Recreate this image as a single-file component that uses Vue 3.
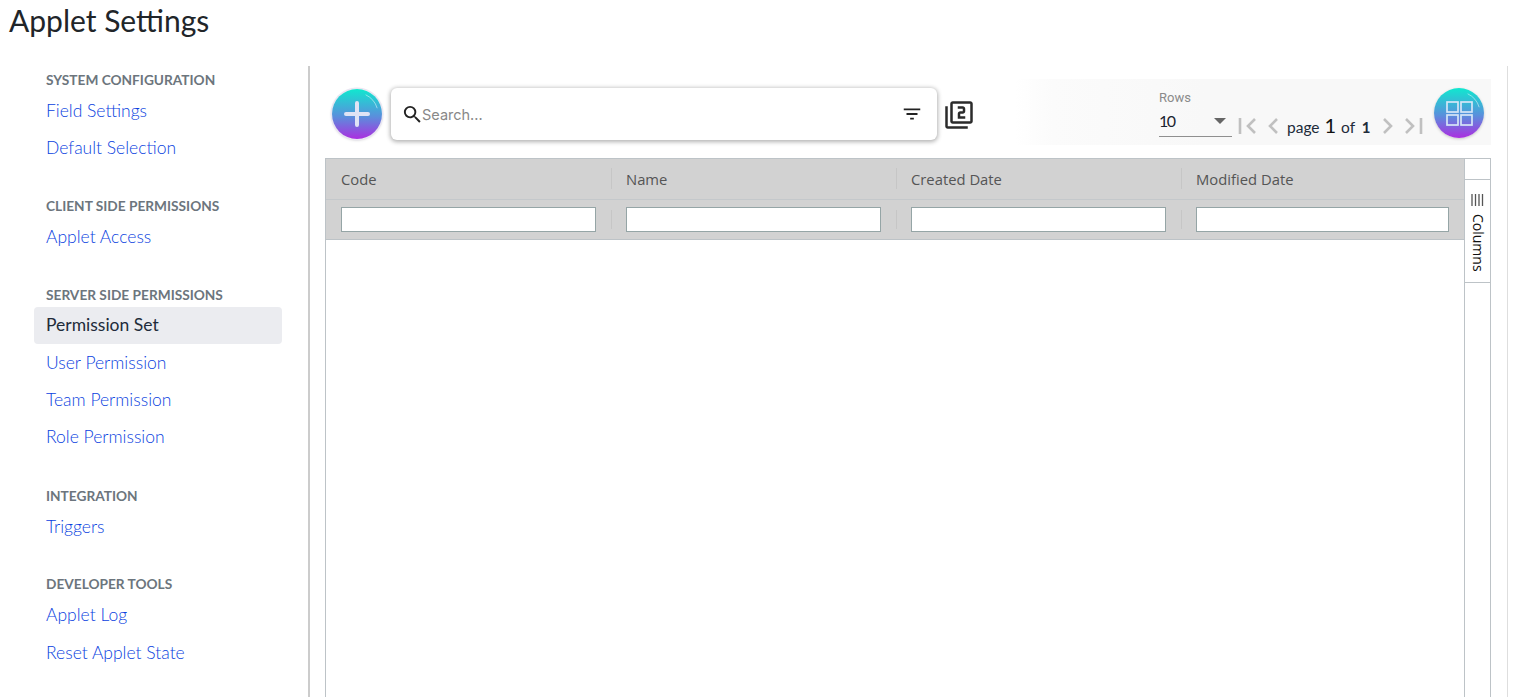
<script setup>
const groups = [
  { title: 'SYSTEM CONFIGURATION', items: ['Field Settings', 'Default Selection'] },
  { title: 'CLIENT SIDE PERMISSIONS', items: ['Applet Access'] },
  { title: 'SERVER SIDE PERMISSIONS', items: ['Permission Set', 'User Permission', 'Team Permission', 'Role Permission'] },
  { title: 'INTEGRATION', items: ['Triggers'] },
  { title: 'DEVELOPER TOOLS', items: ['Applet Log', 'Reset Applet State'] },
]
const columns = ['Code', 'Name', 'Created Date', 'Modified Date']
</script>

<template>
  <div class="page">
    <h1 class="title">Applet Settings</h1>
    <div class="body">
      <aside class="sidebar">
        <section v-for="g in groups" :key="g.title" class="group">
          <h2 class="heading">{{ g.title }}</h2>
          <a v-for="i in g.items" :key="i" class="link" :class="{ active: i === 'Permission Set' }">{{ i }}</a>
        </section>
      </aside>
      <main class="main">
        <div class="toolbar">
          <button class="orb add">
            <svg width="30" height="30" viewBox="0 0 30 30"><path d="M15 4v22M4 15h22" stroke="#e0e3f5" stroke-width="4" stroke-linecap="round" fill="none"/></svg>
            <svg class="shine" width="50" height="50" viewBox="0 0 52 52"><path d="M35 6a23 23 0 0 1 12 14" stroke="#fff" stroke-opacity=".5" stroke-width="1" fill="none"/></svg>
          </button>
          <div class="search">
            <svg width="23" height="23" viewBox="0 0 24 24"><path fill="#222" d="M15.5 14h-.79l-.28-.27A6.47 6.47 0 0 0 16 9.5 6.5 6.5 0 1 0 9.5 16c1.61 0 3.09-.59 4.23-1.57l.27.28v.79l5 4.99L20.49 19l-4.99-5zm-6 0C7.01 14 5 11.99 5 9.5S7.01 5 9.5 5 14 7.01 14 9.5 11.99 14 9.5 14z"/></svg>
            <span class="placeholder">Search...</span>
            <svg class="filter" width="22" height="22" viewBox="0 0 24 24"><path fill="#222" d="M10 18h4v-2h-4v2zM3 6v2h18V6H3zm3 7h12v-2H6v2z"/></svg>
          </div>
          <svg class="library" width="30" height="30" viewBox="0 0 24 24"><path fill="#2b2b2b" d="M3 5H1v16c0 1.100.9 2 2 2h16v-2H3V5zm18-4H7c-1.100 0-2 .9-2 2v14c0 1.100.9 2 2 2h14c1.100 0 2-.9 2-2V3c0-1.100-.9-2-2-2zm0 16H7V3h14v14zm-4-4h-4v-2h2c1.100 0 2-.89 2-2V7c0-1.110-.9-2-2-2h-4v2h4v2h-2c-1.100 0-2 .89-2 2v4h6v-2z"/></svg>
          <div class="pager">
            <div class="rows">
              <span class="rows-label">Rows</span>
              <div class="rows-select"><span>10</span><i class="caret"></i></div>
            </div>
            <div class="nav">
              <svg width="19" height="22" viewBox="0 0 19 22"><path d="M2 3v16M17 4l-7 7 7 7" stroke="#c0c0c0" stroke-width="2.600" fill="none"/></svg>
              <svg class="prev" width="13" height="22" viewBox="0 0 13 22"><path d="M11 4l-7 7 7 7" stroke="#c0c0c0" stroke-width="2.600" fill="none"/></svg>
              <span class="pagetext">page <b>1</b> of <em>1</em></span>
              <svg class="next" width="13" height="22" viewBox="0 0 13 22"><path d="M2 4l7 7-7 7" stroke="#c0c0c0" stroke-width="2.600" fill="none"/></svg>
              <svg class="last" width="19" height="22" viewBox="0 0 19 22"><path d="M17 3v16M2 4l7 7-7 7" stroke="#c0c0c0" stroke-width="2.600" fill="none"/></svg>
            </div>
            <button class="orb view">
              <svg width="27" height="25" viewBox="0 0 27 25" fill="none" stroke="#d5e6f7" stroke-width="1.700"><rect x="1" y="1" width="11" height="10"/><rect x="15" y="1" width="11" height="10"/><rect x="1" y="14" width="11" height="10"/><rect x="15" y="14" width="11" height="10"/></svg>
              <svg class="shine" width="50" height="50" viewBox="0 0 52 52"><path d="M35 6a23 23 0 0 1 12 14" stroke="#fff" stroke-opacity=".5" stroke-width="1" fill="none"/></svg>
            </button>
          </div>
        </div>
        <div class="grid">
          <div class="table">
            <div class="head">
              <div class="row labels">
                <div v-for="c in columns" :key="c" class="cell">{{ c }}</div>
              </div>
              <div class="row filters">
                <div v-for="c in columns" :key="c" class="cell"><input class="box" type="text" :aria-label="c" /></div>
              </div>
            </div>
          </div>
          <div class="side">
            <div class="tab">
              <svg width="13" height="12" viewBox="0 0 13 12"><path d="M1 0v12M4.500 0v12M8 0v12M11.500 0v12" stroke="#555" stroke-width="1.300"/></svg>
              <span>Columns</span>
            </div>
          </div>
        </div>
      </main>
    </div>
  </div>
</template>

<style>
html, body { margin: 0; height: 697px; overflow: hidden; background: #fff; }
</style>

<style scoped>
.page { height: 697px; overflow: hidden; font-family: Lato, sans-serif; display: flex; flex-direction: column; }
.title { margin: 0; height: 66px; padding: 2px 0 0 9px; box-sizing: border-box; font: 400 30px/36px Lato, sans-serif; color: #212529; }
.body { flex: 1; display: flex; min-height: 0; }
.sidebar { width: 308px; flex: none; padding: 2px 26px 0 34px; box-sizing: border-box; }
.group { margin-bottom: 27.500px; }
.group:nth-child(3) { margin-bottom: 28px; }
.heading { margin: 0; padding-left: 12px; height: 24px; font: 700 13.700px/24px Lato, sans-serif; color: #6c757d; }
.link { display: block; height: 37.250px; padding-left: 12px; font: 300 17.500px/37.250px Lato, sans-serif; color: #0a3fe0; border-radius: 4px; }
.link.active { height: 37px; background: #ebecf0; color: #212b3a; font-weight: 400; line-height: 36px; }
.main { width: 1200px; flex: none; height: 100%; box-sizing: border-box; border-left: 2px solid #ccc; border-right: 1px solid #dedede; padding: 13px 16px 0 15px; }
.toolbar { height: 66px; display: flex; align-items: center; margin-bottom: 13px; }
.orb { width: 50px; height: 50px; border-radius: 50%; border: 0; padding: 0; background: linear-gradient(180deg, #10e8cf 0%, #5a8fdc 55%, #ab2ee0 100%); display: flex; align-items: center; justify-content: center; position: relative; flex: none; }
.add { margin: 4px 0 0 7px; box-shadow: 0 0 0 1.500px #e9e6f2, 0 1px 3px rgba(0,0,0,.25); }
.view { margin: 2px 0 0 auto; box-shadow: 0 1px 3px rgba(0,0,0,.2); }
.shine { position: absolute; left: 0; top: 0; }
.search { width: 546px; height: 52px; margin: 4px 0 0 9px; box-sizing: border-box; background: #fff; border-radius: 6px; box-shadow: 0 1px 4px 1px rgba(0,0,0,.3); display: flex; align-items: center; padding: 0 14px 0 10px; }
.placeholder { margin-left: -2px; font: 400 14.500px Inter, "Open Sans", sans-serif; color: #888; }
.filter { margin-left: auto; }
.library { margin: 6px 0 0 7px; flex: none; }
.pager { margin-left: auto; width: 476px; height: 66px; box-sizing: border-box; padding: 0 7px 0 144px; background: linear-gradient(90deg, #fff 0%, #fbfbfb 8%, #f8f8f8 40%, #f8f8f8 100%); display: flex; align-items: center; }
.rows { width: 73px; flex: none; display: flex; flex-direction: column; margin-top: 4px; }
.rows-label { font: 400 13px/14px Roboto, sans-serif; color: #8a8a8a; }
.rows-select { display: flex; align-items: center; justify-content: space-between; height: 31px; border-bottom: 1px solid #8f8f8f; font: 400 16px/24px Lato, sans-serif; letter-spacing: -1.500px; color: #1b2430; }
.caret { width: 0; height: 0; margin-right: 6px; border: 6px solid transparent; border-top: 6px solid #666; border-bottom: 0; }
.nav { display: flex; align-items: center; margin-top: 28px; margin-left: 6px; }
.prev { margin-left: 9px; }
.pagetext { margin: -2px 0 0 8px; width: 95px; flex: none; font: 400 15.500px Lato, sans-serif; color: #212b3a; white-space: nowrap; }
.pagetext b { font-size: 20px; font-weight: 400; color: #111; padding: 0 1px; }
.pagetext em { font: 700 15px Lato, sans-serif; font-style: normal; padding-left: 3px; }
.next { margin-left: 0; }
.last { margin-left: 9px; }
.grid { height: 560px; display: flex; border: 1px solid #bdc3c7; box-sizing: border-box; }
.table { flex: 1; min-width: 0; }
.head { background: #d2d2d2; border-bottom: 1px solid #bdc3c7; }
.row { display: grid; grid-template-columns: 285px 285px 285px 1fr; }
.labels { height: 40px; border-bottom: 1px solid #c4c8cb; }
.filters { height: 39px; }
.cell { position: relative; padding: 0 15px; font: 400 14.800px/40px "Open Sans", sans-serif; color: #555; display: flex; align-items: center; margin-top: -1px; }
.filters .cell { margin-top: 0; }
.cell + .cell::before { content: ""; position: absolute; left: 0; top: 10px; bottom: 10px; width: 1px; background: #c6c6c6; }
.box { width: 100%; height: 25px; box-sizing: border-box; border: 1px solid #95a5a6; background: #fff; padding: 0; margin: 0; outline: 0; border-radius: 0; }
.side { width: 26px; flex: none; border-left: 1px solid #bdc3c7; background: #fff; padding-top: 20px; box-sizing: border-box; }
.tab { height: 104px; box-sizing: border-box; border-top: 1px solid #bdc3c7; border-bottom: 1px solid #bdc3c7; display: flex; flex-direction: column; align-items: center; padding-top: 14px; }
.tab svg { margin-bottom: 8px; }
.tab span { writing-mode: vertical-rl; font: 400 14px/14px "Open Sans", sans-serif; color: #111; }
</style>
